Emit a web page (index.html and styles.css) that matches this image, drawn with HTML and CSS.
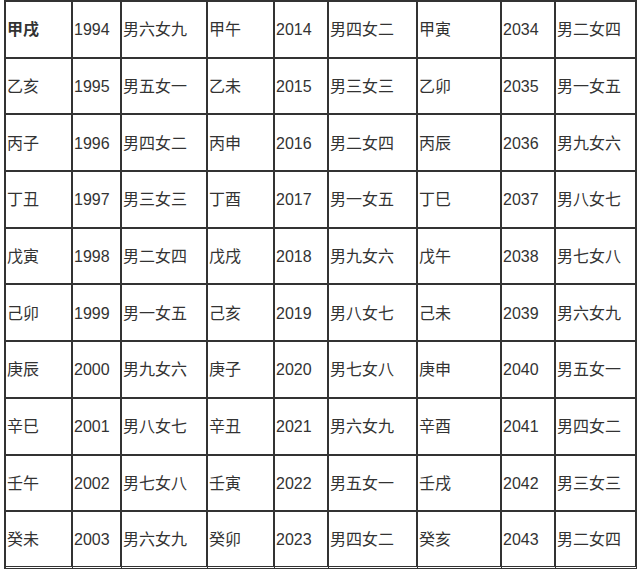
FILE: index.html
```html
<!DOCTYPE html>
<html lang="zh-CN">
<head>
<meta charset="utf-8">
<title>干支表</title>
<link rel="stylesheet" href="styles.css">
</head>
<body>
<table class="gz">
<colgroup>
<col class="c1"><col class="c2"><col class="c3">
<col class="c4"><col class="c5"><col class="c6">
<col class="c7"><col class="c8"><col class="c9">
</colgroup>
<tbody>
<tr><td class="b">甲戌</td><td>1994</td><td>男六女九</td><td>甲午</td><td>2014</td><td>男四女二</td><td>甲寅</td><td>2034</td><td>男二女四</td></tr>
<tr><td>乙亥</td><td>1995</td><td>男五女一</td><td>乙未</td><td>2015</td><td>男三女三</td><td>乙卯</td><td>2035</td><td>男一女五</td></tr>
<tr><td>丙子</td><td>1996</td><td>男四女二</td><td>丙申</td><td>2016</td><td>男二女四</td><td>丙辰</td><td>2036</td><td>男九女六</td></tr>
<tr><td>丁丑</td><td>1997</td><td>男三女三</td><td>丁酉</td><td>2017</td><td>男一女五</td><td>丁巳</td><td>2037</td><td>男八女七</td></tr>
<tr><td>戊寅</td><td>1998</td><td>男二女四</td><td>戊戌</td><td>2018</td><td>男九女六</td><td>戊午</td><td>2038</td><td>男七女八</td></tr>
<tr><td>己卯</td><td>1999</td><td>男一女五</td><td>己亥</td><td>2019</td><td>男八女七</td><td>己未</td><td>2039</td><td>男六女九</td></tr>
<tr><td>庚辰</td><td>2000</td><td>男九女六</td><td>庚子</td><td>2020</td><td>男七女八</td><td>庚申</td><td>2040</td><td>男五女一</td></tr>
<tr><td>辛巳</td><td>2001</td><td>男八女七</td><td>辛丑</td><td>2021</td><td>男六女九</td><td>辛酉</td><td>2041</td><td>男四女二</td></tr>
<tr><td>壬午</td><td>2002</td><td>男七女八</td><td>壬寅</td><td>2022</td><td>男五女一</td><td>壬戌</td><td>2042</td><td>男三女三</td></tr>
<tr class="last"><td>癸未</td><td>2003</td><td>男六女九</td><td>癸卯</td><td>2023</td><td>男四女二</td><td>癸亥</td><td>2043</td><td>男二女四</td></tr>
</tbody>
</table>
</body>
</html>
```
FILE: styles.css
```css
html, body {
  margin: 0;
  padding: 0;
  background: #ffffff;
}
body {
  font-family: "Liberation Sans", "Noto Sans CJK SC", sans-serif;
  font-size: 16px;
  color: #333333;
}
.gz {
  margin-left: 4px;
  border-collapse: separate;
  border-spacing: 0;
  table-layout: fixed;
  width: 633px;
  border-left: 2px solid #333;
  border-top: 2px solid #333;
}
.gz td {
  height: 54.7px;
  padding: 2px 0 0 1px;
  border-right: 2px solid #333;
  border-bottom: 2px solid #333;
  vertical-align: middle;
  white-space: nowrap;
  overflow: hidden;
  line-height: 20px;
  box-sizing: border-box;
}
.gz tr { height: 56.7px; }
.gz .last td {
  border-bottom: 3px double #333;
}
.gz .b { font-weight: bold; }
.c1 { width: 67px; }
.c2 { width: 49px; }
.c3 { width: 86px; }
.c4 { width: 67px; }
.c5 { width: 54px; }
.c6 { width: 89px; }
.c7 { width: 84px; }
.c8 { width: 54px; }
.c9 { width: 81px; }
```
